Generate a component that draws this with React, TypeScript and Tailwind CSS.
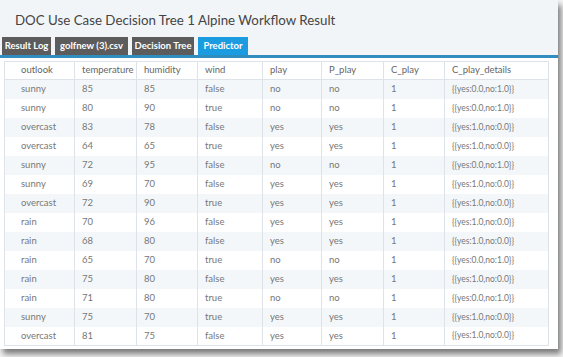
import React from "react";

const rows: string[][] = [
  ["sunny", "85", "85", "false", "no", "no", "1", "{{yes:0.0,no:1.0}}"],
  ["sunny", "80", "90", "true", "no", "no", "1", "{{yes:0.0,no:1.0}}"],
  ["overcast", "83", "78", "false", "yes", "yes", "1", "{{yes:1.0,no:0.0}}"],
  ["overcast", "64", "65", "true", "yes", "yes", "1", "{{yes:1.0,no:0.0}}"],
  ["sunny", "72", "95", "false", "no", "no", "1", "{{yes:0.0,no:1.0}}"],
  ["sunny", "69", "70", "false", "yes", "yes", "1", "{{yes:1.0,no:0.0}}"],
  ["overcast", "72", "90", "true", "yes", "yes", "1", "{{yes:1.0,no:0.0}}"],
  ["rain", "70", "96", "false", "yes", "yes", "1", "{{yes:1.0,no:0.0}}"],
  ["rain", "68", "80", "false", "yes", "yes", "1", "{{yes:1.0,no:0.0}}"],
  ["rain", "65", "70", "true", "no", "no", "1", "{{yes:0.0,no:1.0}}"],
  ["rain", "75", "80", "false", "yes", "yes", "1", "{{yes:1.0,no:0.0}}"],
  ["rain", "71", "80", "true", "no", "no", "1", "{{yes:0.0,no:1.0}}"],
  ["sunny", "75", "70", "true", "yes", "yes", "1", "{{yes:1.0,no:0.0}}"],
  ["overcast", "81", "75", "false", "yes", "yes", "1", "{{yes:1.0,no:0.0}}"],
];

const columns = ["outlook", "temperature", "humidity", "wind", "play", "P_play", "C_play", "C_play_details"];
const widths = [70, 62, 61, 65, 59, 62, 61, 104];

const tabs = [
  { label: "Result Log", w: "w-[49px]" },
  { label: "golfnew (3).csv", w: "w-[73px]" },
  { label: "Decision Tree", w: "w-[62px]" },
  { label: "Predictor", w: "w-[50px]", active: true },
];

const App = () => {
  return (
    <div className="w-[563px] h-[357px] bg-[#f4f4f4] overflow-hidden font-['Lato',sans-serif]">
      <div className="w-[558px] h-[349px] bg-white shadow-[3px_5px_6px_rgba(0,0,0,0.5)] flex flex-col">
        {/* Header + tabs */}
        <div className="bg-[#f2f5f8] border-b-[3px] border-[#2f8dc0]">
          <h1 className="h-[37px] pl-[15px] pt-[11px] text-[13.3px] leading-[18px] text-[#444]">
            DOC Use Case Decision Tree 1 Alpine Workflow Result
          </h1>
          <div className="flex gap-[4px] pl-[2px] h-[18px]">
            {tabs.map((t) => (
              <div
                key={t.label}
                className={`${t.w} flex items-center justify-center text-[9.5px] font-bold text-white whitespace-nowrap ${
                  t.active ? "bg-[#1c9ce0]" : "bg-[#5c5c5c]"
                }`}
              >
                {t.label}
              </div>
            ))}
          </div>
        </div>

        {/* Predictor table */}
        <div className="pl-[4px] pt-[3px]">
          <table className="table-fixed border-collapse border border-[#dde3e8] text-[9.5px] text-[#777]">
            <colgroup>
              {widths.map((w, i) => (
                <col key={i} style={{ width: w }} />
              ))}
            </colgroup>
            <thead>
              <tr className="h-[18px] border-b border-[#dde3e8]">
                {columns.map((c, i) => (
                  <th
                    key={c}
                    className={`font-normal text-left text-[#666] border-l border-[#dde3e8] ${
                      i === 0 ? "pl-[16px]" : "pl-[7px]"
                    }`}
                  >
                    {c}
                  </th>
                ))}
              </tr>
            </thead>
            <tbody>
              {rows.map((r, ri) => (
                <tr key={ri} className={`h-[19px] ${ri % 2 === 0 ? "bg-[#f4f7fa]" : "bg-white"}`}>
                  {r.map((v, ci) => (
                    <td
                      key={ci}
                      className={`border-l border-[#dde3e8] whitespace-nowrap ${
                        ci === 0 ? "pl-[16px]" : "pl-[7px]"
                      } ${ci === 7 ? "text-[8.5px]" : ""}`}
                    >
                      {v}
                    </td>
                  ))}
                </tr>
              ))}
            </tbody>
          </table>
        </div>
      </div>
    </div>
  );
};

export default App;
